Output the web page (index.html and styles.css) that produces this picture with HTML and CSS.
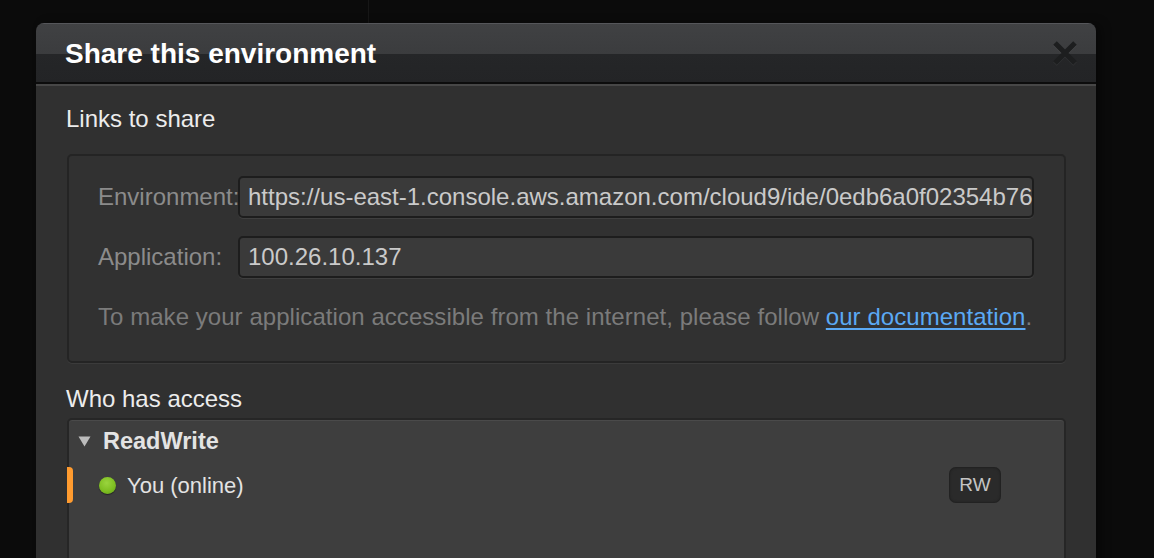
FILE: index.html
```html
<!DOCTYPE html>
<html lang="en">
<head>
<meta charset="utf-8">
<title>Share this environment</title>
<link rel="stylesheet" href="styles.css">
</head>
<body>
<div class="stage">
  <div class="dialog">
    <div class="dialog-header">
      <h1 class="dialog-title">Share this environment</h1>
      <button class="close-btn" aria-label="Close">
        <svg width="26" height="26" viewBox="0 0 26 26"><path d="M3 3 L23 23 M23 3 L3 23" stroke="#1d1e1f" stroke-width="5" stroke-linecap="butt" fill="none"/></svg>
      </button>
    </div>
    <div class="dialog-body">
      <h2 class="section-title">Links to share</h2>
      <div class="links-box">
        <div class="link-grid">
          <label class="link-label">Environment:</label>
          <div class="link-input">https://us-east-1.console.aws.amazon.com/cloud9/ide/0edb6a0f02354b76</div>
          <label class="link-label">Application:</label>
          <div class="link-input">100.26.10.137</div>
        </div>
        <p class="info-text">To make your application accessible from the internet, please follow <a href="#" class="doc-link">our documentation</a>.</p>
      </div>
      <h2 class="section-title access-title">Who has access</h2>
      <div class="access-box">
        <div class="group-head">
          <svg class="caret" width="13" height="11" viewBox="0 0 13 11"><path d="M0.5 0.5 H12.5 L6.5 10.5 Z" fill="#bcbcbc"/></svg>
          <span class="group-name">ReadWrite</span>
        </div>
        <div class="member-row">
          <span class="member-marker"></span>
          <span class="status-dot"></span>
          <span class="member-name">You (online)</span>
          <span class="perm-badge">RW</span>
        </div>
      </div>
    </div>
  </div>
</div>
</body>
</html>
```
FILE: styles.css
```css
html, body {
  margin: 0;
  padding: 0;
  height: 100%;
  overflow: hidden;
}
body {
  background: #0b0b0b;
  font-family: "Liberation Sans", Arial, Helvetica, sans-serif;
}
.stage {
  padding: 23px 58px 0 36px;
  background: linear-gradient(to right, transparent 368px, #171717 368px, #171717 369px, transparent 369px) no-repeat 0 0 / 100% 23px;
}
.dialog {
  width: 1060px;
  border-radius: 8px 8px 0 0;
  overflow: hidden;
  box-shadow: 6px 0 10px rgba(0,0,0,0.35);
}
.dialog-header {
  display: flex;
  align-items: center;
  justify-content: space-between;
  padding: 0 18px 0 29px;
  background: linear-gradient(to bottom, #404143 0, #3b3c3e 30px, #252628 30px, #232426 100%);
  border-top: 1px solid #55565a;
  border-bottom: 2px solid #0c0c0c;
  box-sizing: border-box;
  height: 61px;
}
.dialog-title {
  margin: 0;
  font-size: 28px;
  font-weight: bold;
  color: #ffffff;
  position: relative;
  top: 1px;
}
.close-btn {
  background: none;
  border: none;
  padding: 0;
  width: 26px;
  height: 26px;
  filter: drop-shadow(0 1px 0 rgba(255,255,255,0.06));
}
.close-btn svg { display: block; }
.dialog-body {
  background: #303030;
  border-top: 2px solid #474747;
  padding: 19px 30px 0 31px;
  height: 600px;
}
.section-title {
  margin: 0;
  font-size: 24px;
  font-weight: normal;
  line-height: 28px;
  color: #ececec;
  margin-left: -1px;
}
.links-box {
  margin-top: 21px;
  border: 2px solid #242424;
  border-radius: 5px;
  background: #313131;
  box-shadow: 0 1px 0 #3b3b3b;
  padding: 20px 30px 0 29px;
  height: 209px;
  box-sizing: border-box;
}
.link-grid {
  display: grid;
  grid-template-columns: 140px 1fr;
  row-gap: 18px;
  align-items: center;
}
.link-label {
  font-size: 24px;
  color: #8b8b8b;
  white-space: nowrap;
}
.link-input {
  height: 42px;
  box-sizing: border-box;
  border: 2px solid #1d1d1d;
  border-radius: 5px;
  background: #3a3a3a;
  box-shadow: 0 1px 0 #3f3f3f;
  color: #cacaca;
  font-size: 24px;
  line-height: 38px;
  padding: 0 8px;
  white-space: nowrap;
  overflow: hidden;
}
.info-text {
  margin: 24px 0 0 0;
  font-size: 24px;
  letter-spacing: 0.05px;
  line-height: 30px;
  color: #7b7b7b;
  white-space: nowrap;
}
.doc-link {
  color: #5ba9f4;
  text-decoration: underline;
  text-underline-offset: 3px;
  text-decoration-thickness: 2px;
}
.access-title {
  margin-top: 22px;
}
.access-box {
  margin-top: 5px;
  border: 2px solid #262626;
  border-radius: 5px;
  background: #3e3e3e;
  box-shadow: inset 0 1px 0 #4a4a4a;
  height: 300px;
  box-sizing: border-box;
}
.group-head {
  display: flex;
  align-items: center;
  height: 42px;
  padding: 0 0 0 9px;
}
.caret {
  display: block;
  margin-right: 12px;
  margin-top: 1px;
}
.group-name {
  font-size: 23.5px;
  font-weight: bold;
  color: #e3e3e3;
}
.member-row {
  display: flex;
  align-items: center;
  height: 36px;
  margin-top: 5px;
}
.member-marker {
  width: 6px;
  height: 36px;
  background: #ff9b2f;
  border-radius: 0 4px 4px 0;
  margin-left: -2px;
}
.status-dot {
  width: 17px;
  height: 17px;
  border-radius: 50%;
  background: radial-gradient(circle at 45% 35%, #9ad43e 0, #7fbf22 55%, #5f9b14 100%);
  box-shadow: 0 1px 1px rgba(0,0,0,0.45);
  margin-left: 26px;
}
.member-name {
  margin-left: 11px;
  font-size: 22px;
  color: #e3e3e3;
  position: relative;
  top: 1px;
}
.perm-badge {
  margin-left: auto;
  margin-right: 63px;
  width: 52px;
  height: 36px;
  box-sizing: border-box;
  border-radius: 7px;
  background: #2a2a2a;
  box-shadow: inset 0 0 3px rgba(0,0,0,0.5);
  color: #c4c4c4;
  font-size: 19px;
  display: flex;
  align-items: center;
  justify-content: center;
}
```
